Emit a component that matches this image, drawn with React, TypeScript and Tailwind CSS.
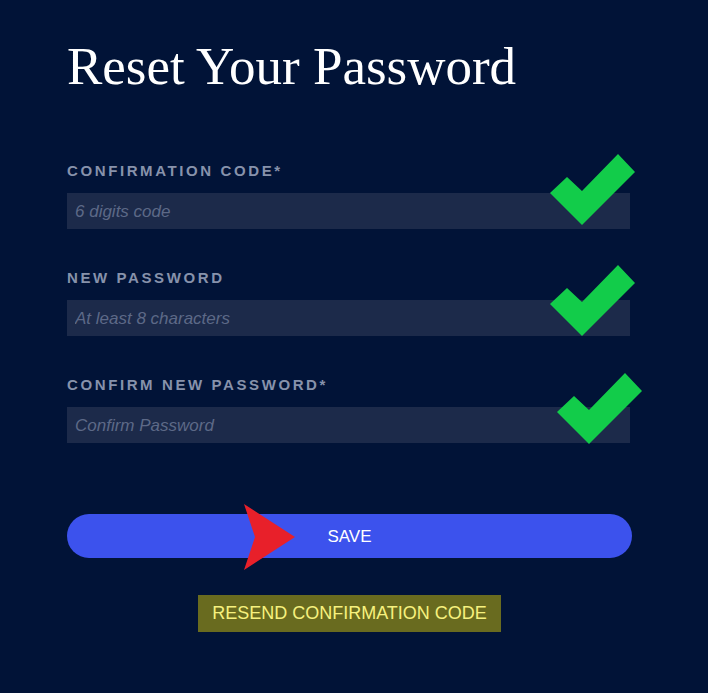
import React from "react";

interface FieldProps {
  label: string;
  placeholder: string;
  type?: string;
}

function Field({ label, placeholder, type = "text" }: FieldProps) {
  return (
    <div className="flex flex-col">
      <label className="mb-[12px] text-[15px] leading-5 font-semibold tracking-[2.6px] text-[#8792ab]">
        {label}
      </label>
      <input
        type={type}
        placeholder={placeholder}
        className="h-[36px] w-[563px] bg-[#1c2a4a] pt-[2px] pl-2 text-[17px] text-white outline-none placeholder:italic placeholder:text-[#5d6987]"
      />
    </div>
  );
}

function Check({ className }: { className: string }) {
  return (
    <svg
      className={`pointer-events-none absolute ${className}`}
      width="85"
      height="72"
      viewBox="0 0 85 72"
    >
      <polygon points="0,39 17,23 32,37 68,0 85,18 32,71" fill="#12cc4a" />
    </svg>
  );
}

export default function App() {
  return (
    <div
      className="relative min-h-screen bg-[#011337] pl-[67px] pt-[40px]"
      style={{ fontFamily: '"Liberation Sans", Arial, sans-serif' }}
    >
      <h1
        className="text-[53px] leading-none font-normal text-white"
        style={{ fontFamily: '"Liberation Serif", "Times New Roman", serif' }}
      >
        Reset Your Password
      </h1>

      <form
        className="mt-[68px] flex w-[565px] flex-col"
        onSubmit={(e) => e.preventDefault()}
      >
        <div className="flex flex-col gap-[39px]">
          <Field label="CONFIRMATION CODE*" placeholder="6 digits code" />
          <Field
            label="NEW PASSWORD"
            placeholder="At least 8 characters"
            type="password"
          />
          <Field
            label="CONFIRM NEW PASSWORD*"
            placeholder="Confirm Password"
            type="password"
          />
        </div>

        <button
          type="submit"
          className="mt-[71px] h-[44px] w-full rounded-full bg-[#3c52ed] pt-[2px] text-[17px] text-white"
        >
          SAVE
        </button>

        <div className="mt-[37px] flex justify-center">
          <button
            type="button"
            className="h-[37px] bg-[#696b1f] px-[14px] text-[18px] text-[#f6f17e]"
          >
            RESEND CONFIRMATION CODE
          </button>
        </div>
      </form>

      <Check className="left-[550px] top-[154px]" />
      <Check className="left-[550px] top-[265px]" />
      <Check className="left-[557px] top-[373px]" />

      <svg
        className="pointer-events-none absolute left-[244px] top-[504px]"
        width="51"
        height="66"
        viewBox="0 0 51 66"
      >
        <polygon points="0,0 51,33 0,66 11,33" fill="#e8202a" />
      </svg>
    </div>
  );
}
